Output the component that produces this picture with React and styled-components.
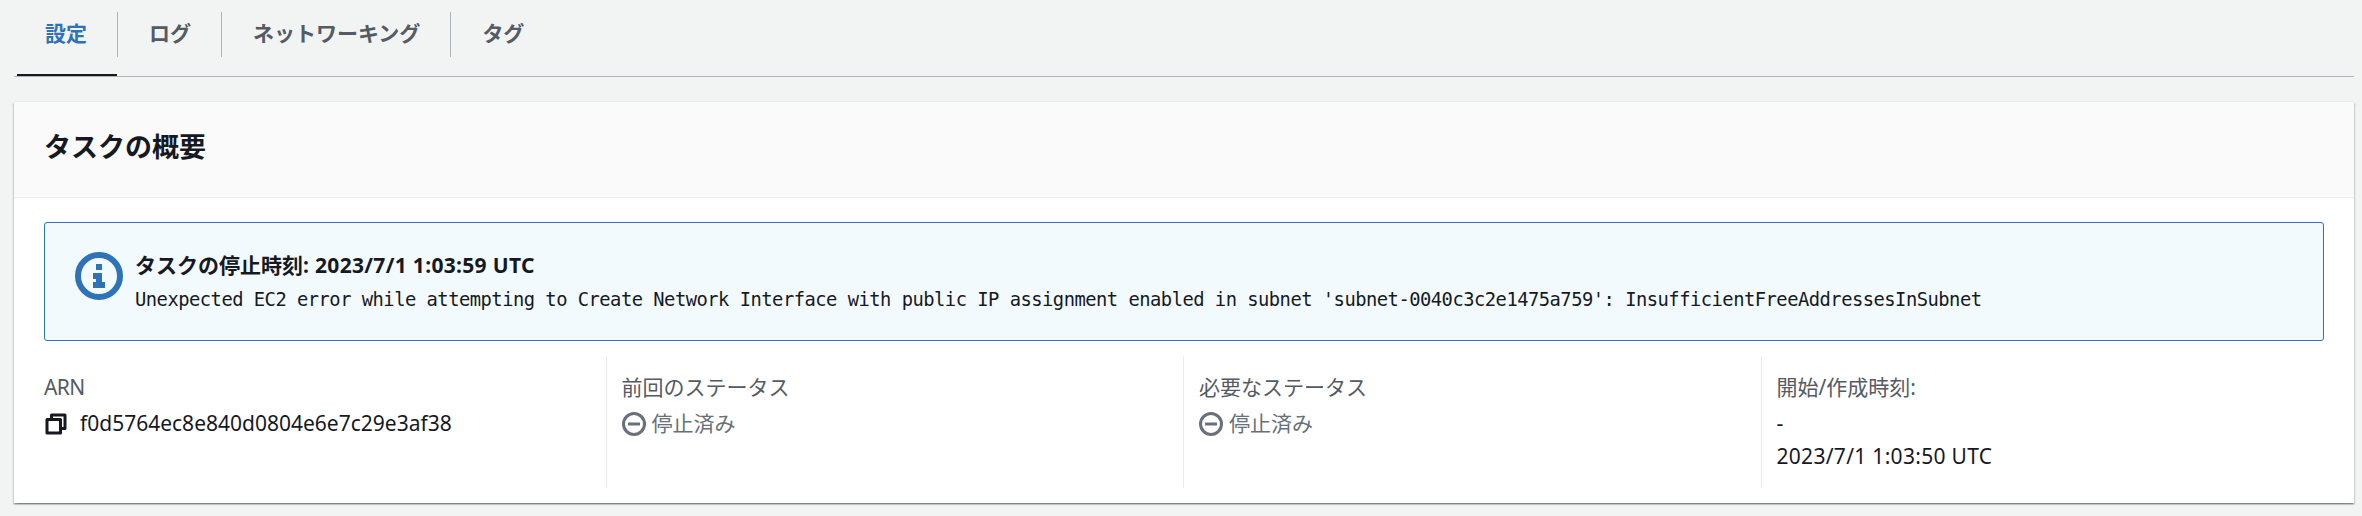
import React from 'react';
import styled, { createGlobalStyle } from 'styled-components';

const GlobalStyle = createGlobalStyle`
  * { box-sizing: border-box; }
  body {
    margin: 0;
    background: #f2f3f3;
    color: #16191f;
    font-family: 'Noto Sans', 'Noto Sans CJK JP', sans-serif;
    font-size: 21px;
    line-height: 33px;
  }
`;

const Page = styled.div`
  height: 516px;
  padding: 0 8px 0 14px;
  overflow: hidden;
`;

const TabList = styled.nav`
  display: flex;
  height: 77px;
  padding-left: 3px;
  border-bottom: 1px solid #aab7b8;
`;

const Tab = styled.a`
  height: 76px;
  padding-top: 12px;
  color: ${(p) => (p.$active ? '#2e73b8' : '#545b64')};
  font-weight: 700;
  border-bottom: 2px solid ${(p) => (p.$active ? '#16191f' : 'transparent')};
`;

const TabLabel = styled.span`
  display: block;
  height: 45px;
  line-height: 43px;
  padding: 0 30px 0 ${(p) => (p.$first ? 28 : 31)}px;
`;

const TabDivider = styled.span`
  width: 1px;
  height: 45px;
  margin-top: 12px;
  background: #aab7b8;
`;

const Card = styled.section`
  margin-top: 24px;
  height: 402px;
  background: #fff;
  border-top: 1px solid #eaeded;
  box-shadow: 0 1.5px 1.5px 0 rgba(0, 28, 36, 0.3),
    1px 1.5px 1.5px 0 rgba(0, 28, 36, 0.15),
    -1px 1.5px 1.5px 0 rgba(0, 28, 36, 0.15);
`;

const CardHeader = styled.header`
  height: 96px;
  padding: 28px 30px 0;
  background: #fafafa;
  border-bottom: 1px solid #eaeded;
`;

const Title = styled.h2`
  margin: 0;
  font-size: 27px;
  line-height: 33px;
  font-weight: 700;
`;

const Alert = styled.div`
  display: flex;
  gap: 12px;
  height: 119px;
  margin: 24px 30px 0;
  padding: 26px 30px 0;
  background: #f2fafd;
  border: 1px solid #2e73b8;
  border-radius: 3px;
`;

const AlertIcon = styled.svg`
  flex: none;
  width: 48px;
  height: 48px;
  margin-top: 3px;
`;

const AlertTitle = styled.div`
  font-weight: 700;
`;

const Timestamp = styled.span`
  letter-spacing: ${(p) => p.$tracking}px;
`;

const AlertMessage = styled.div`
  padding-top: 1px;
  font-family: 'DejaVu Sans Mono', monospace;
  font-size: 18.8px;
  letter-spacing: -0.509px;
  white-space: nowrap;
`;

const Columns = styled.div`
  display: grid;
  grid-template-columns: repeat(4, 1fr);
  height: 132px;
  margin: 15px 16px 0 14px;
`;

const Column = styled.div`
  padding: 15px 15px 0;
  border-left: 1px solid ${(p) => (p.$first ? 'transparent' : '#eaeded')};
`;

const Label = styled.div`
  height: 36px;
  color: #545b64;
  letter-spacing: ${(p) => p.$tracking || 0}px;
`;

const Value = styled.div`
  display: flex;
  align-items: center;
  height: 33px;
  gap: ${(p) => p.$gap || 0}px;
  color: ${(p) => (p.$muted ? '#687078' : '#16191f')};
`;

const SmallIcon = styled.svg`
  flex: none;
  width: 24px;
  height: 24px;
`;

const InfoIcon = () => (
  <AlertIcon viewBox="0 0 48 48">
    <circle cx="24" cy="24" r="21" fill="none" stroke="#2e73b8" strokeWidth="6" />
    <path d="M21 12h6v6h-6zM18 21h9v9h3v6H18v-6h3v-3h-3z" fill="#2e73b8" />
  </AlertIcon>
);

const CopyIcon = () => (
  <SmallIcon viewBox="0 0 24 24" fill="none" stroke="#16191f" strokeWidth="3" strokeLinejoin="round">
    <path d="M7.5 6.5V3H21v13.5h-3.5" />
    <path d="M3 7.5h13.5V21H3z" />
  </SmallIcon>
);

const StoppedIcon = () => (
  <SmallIcon viewBox="0 0 24 24" fill="none" stroke="#687078" strokeWidth="3">
    <circle cx="12" cy="12" r="10.5" />
    <path d="M6 12h12" />
  </SmallIcon>
);

const tabs = ['設定', 'ログ', 'ネットワーキング', 'タグ'];

export default function App() {
  return (
    <Page>
      <GlobalStyle />
      <TabList>
        {tabs.map((name, i) => (
          <React.Fragment key={name}>
            {i > 0 && <TabDivider />}
            <Tab $active={i === 0}>
              <TabLabel $first={i === 0}>{name}</TabLabel>
            </Tab>
          </React.Fragment>
        ))}
      </TabList>
      <Card>
        <CardHeader>
          <Title>タスクの概要</Title>
        </CardHeader>
        <Alert>
          <InfoIcon />
          <div>
            <AlertTitle>
              タスクの停止時刻<Timestamp $tracking={0.32}>: 2023/7/1 1:03:59 UTC</Timestamp>
            </AlertTitle>
            <AlertMessage>
              Unexpected EC2 error while attempting to Create Network Interface with public IP assignment
              enabled in subnet 'subnet-0040c3c2e1475a759': InsufficientFreeAddressesInSubnet
            </AlertMessage>
          </div>
        </Alert>
        <Columns>
          <Column $first>
            <Label $tracking={-0.6}>ARN</Label>
            <Value $gap={12}>
              <CopyIcon />
              <span>f0d5764ec8e840d0804e6e7c29e3af38</span>
            </Value>
          </Column>
          <Column>
            <Label>前回のステータス</Label>
            <Value $muted $gap={6}>
              <StoppedIcon />
              停止済み
            </Value>
          </Column>
          <Column>
            <Label>必要なステータス</Label>
            <Value $muted $gap={6}>
              <StoppedIcon />
              停止済み
            </Value>
          </Column>
          <Column>
            <Label>開始/作成時刻<Timestamp $tracking={0.3}>:</Timestamp></Label>
            <Value>-</Value>
            <Value>
              <Timestamp $tracking={0.3}>2023/7/1 1:03:50 UTC</Timestamp>
            </Value>
          </Column>
        </Columns>
      </Card>
    </Page>
  );
}
